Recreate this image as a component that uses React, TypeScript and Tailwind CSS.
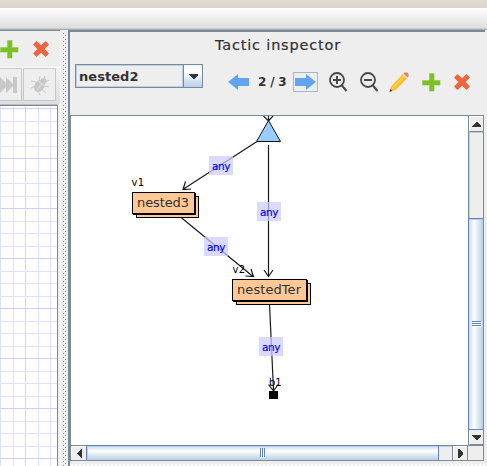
import React from "react";

const GRID_X = [0, 13, 25, 38, 50];
const GRID_Y = Array.from({ length: 29 }, (_, i) => Math.round(2.4 + i * 12.5));

function Plus() {
  return (
    <svg width="20" height="20" viewBox="0 0 20 20" shapeRendering="crispEdges">
      <path d="M8 1h5v7h6v5h-6v6H8v-6H1V8h7z" fill="#7fbf26" stroke="#b5dc85" strokeWidth=".6" />
    </svg>
  );
}

function Cross() {
  return (
    <svg width="18" height="18" viewBox="0 0 18 18">
      <path d="M4.500 1 9 5.300 13.500 1 17 4.500 12.700 9l4.300 4.400-3.500 3.600L9 12.700 4.500 17 1 13.400 5.300 9 1 4.500z" fill="#ee6640" />
    </svg>
  );
}

function Arrow({ flip = false }: { flip?: boolean }) {
  return (
    <svg width="21" height="16" viewBox="0 0 21 16" className={flip ? "-scale-x-100" : ""}>
      <path d="M0 4h11V0l10 8-10 8v-4H0z" fill="#62a4ef" />
    </svg>
  );
}

function Magnifier({ plus = false }: { plus?: boolean }) {
  return (
    <svg width="19" height="20" viewBox="0 0 19 20" fill="none" stroke="#484848">
      <circle cx="8" cy="8" r="7" strokeWidth="1.8" />
      <path d="m12.500 13 5 6" strokeWidth="2" />
      <path d={plus ? "M4 8h8M8 4v8" : "M4 8h8"} strokeWidth="2" />
    </svg>
  );
}

function Pencil() {
  return (
    <svg width="20" height="20" viewBox="0 0 20 20">
      <path d="M13.500 2.500 18 6.200 6.300 18.300 1 19.500l1-5z" fill="#fbb92b" />
      <path d="m14.500 3.500 1.700 1.300L4 17.500 2.500 16z" fill="#ffd13f" />
      <path d="m14 2 1.500-1.500h3L19.500 2v2.500L18 6z" fill="#ea8069" />
      <path d="m13.500 2.500 1-.8L18.800 5.400 18 6.300z" fill="#e8e3df" />
      <path d="m1.200 16.800 2.200 2.100L.5 19.700z" fill="#454545" />
    </svg>
  );
}

function Bug() {
  return (
    <svg width="20" height="22" viewBox="0 0 20 22" fill="#c8c8c8" stroke="#c8c8c8">
      <ellipse cx="9.500" cy="12" rx="4.400" ry="6" transform="rotate(35 9.500 12)" />
      <circle cx="13.500" cy="7" r="2.700" />
      <path fill="none" d="m6 8-5-1M6 12l-5 2M8 17l2 4M11 15l5 4M14 12l5 1M9 7l1-5M14 5l1-3M16 8l3-2" />
      <path fill="none" stroke="#eee" strokeWidth=".7" d="m8 7 7 5M12 9l-5 7" />
    </svg>
  );
}

function Caret({ dir }: { dir: "up" | "down" | "left" | "right" }) {
  const shapes = {
    up: "M0 5V4L4 0h1l4 4v1z",
    down: "M0 0h9v1L5 5H4L0 1z",
    left: "M4 0h1v9H4L0 5V4z",
    right: "M0 0h1l4 4v1L1 9H0z",
  };
  const wide = dir === "up" || dir === "down";
  return (
    <svg width={wide ? 9 : 5} height={wide ? 5 : 9} shapeRendering="crispEdges">
      <path d={shapes[dir]} fill="#333" />
    </svg>
  );
}

function Grip({ vertical = false }: { vertical?: boolean }) {
  return vertical ? (
    <svg width="10" height="6" shapeRendering="crispEdges">
      <path d="M1 1h9v1H1zM1 3h9v1H1zM1 5h9v1H1z" fill="#fff" />
      <path d="M0 0h9v1H0zM0 2h9v1H0zM0 4h9v1H0z" fill="#6382bf" />
    </svg>
  ) : (
    <svg width="6" height="10" shapeRendering="crispEdges">
      <path d="M1 1h1v9H1zM3 1h1v9H3zM5 1h1v9H5z" fill="#fff" />
      <path d="M0 0h1v9H0zM2 0h1v9H2zM4 0h1v9H4z" fill="#6382bf" />
    </svg>
  );
}

function EdgeLabel({ x, y }: { x: number; y: number }) {
  return (
    <g>
      <rect x={x} y={y} width="24" height="19" fill="#ccccff" fillOpacity=".72" />
      <text x={x + 3} y={y + 13.5} fontSize="10.500" fill="#0000f5" stroke="#0000f5" strokeWidth=".15" textLength="18.500">any</text>
    </g>
  );
}

function Node({ x, y, w, label }: { x: number; y: number; w: number; label: string }) {
  return (
    <g>
      <g fill="#ffc896" stroke="#000" shapeRendering="crispEdges">
        <rect x={x + 4.5} y={y + 4.5} width={w} height="21" />
        <rect x={x + 1.5} y={y + 1.5} width={w} height="21" fill="#000" />
        <rect x={x + 0.5} y={y + 0.5} width={w} height="21" />
      </g>
      <text x={x + 5} y={y + 15} fontSize="13" fill="#303030" textLength={w - 10}>{label}</text>
    </g>
  );
}

function Graph() {
  return (
    <svg width="397" height="329" viewBox="71 116 397 329" className="block bg-white font-['DejaVu_Sans',sans-serif]">
      <g stroke="#1a1a1a" strokeWidth="1.2" fill="none">
        <path d="m257 141.500-73.500 47.500M185.500 181.500l-2.500 8 8-.5" />
        <path d="m180.500 217 72.500 59.500M251 269l2.500 7.500-8-.5" />
        <path d="M268.500 145v131M264 270l4.500 6.500 4.500-6.500" />
        <path d="m269.500 304 4 86M268.500 384.500l5 6.500 4.500-6.500" />
        <path d="M268.500 116v5M263.500 116l5 5 4.500-5" />
      </g>
      <path d="m268.500 120.500 12 21h-24z" fill="#99ccff" stroke="#111" />
      <Node x={132} y={192} w={62} label="nested3" />
      <Node x={232} y={279} w={74} label="nestedTer" />
      <rect x="269" y="391" width="9" height="8" fill="#000" shapeRendering="crispEdges" />
      <EdgeLabel x={209} y={156} />
      <EdgeLabel x={257} y={202} />
      <EdgeLabel x={204} y={237} />
      <EdgeLabel x={259} y={337} />
      <g fontSize="10" fill="#000">
        <text x="131.500" y="186" textLength="12.500">v1</text>
        <text x="232.500" y="273" textLength="12.500">v2</text>
        <text x="269" y="386" textLength="12.500">b1</text>
      </g>
    </svg>
  );
}

function LeftPane() {
  return (
    <div className="flex w-[60px] shrink-0 flex-col bg-[#eeeeee]">
      <div className="h-px shrink-0 bg-[#7a8a99]" />
      <div className="flex h-[37px] shrink-0 items-center gap-[13px] border-b border-white">
        <div className="-ml-px"><Plus /></div>
        <Cross />
      </div>
      <div className="flex h-[36px] shrink-0 items-start gap-px bg-gradient-to-b from-[#f4f4f4] to-[#dddddd]">
        <div className="flex h-[33px] w-[22px] items-center border border-l-0 border-[#c8c8c8] bg-[#eeeeee]">
          <svg width="17" height="18" viewBox="0 0 17 18" fill="#c8c8c8">
            <path d="M0 1l6 6V1l7 7V1h4v16h-4v-7l-7 7v-6l-6 6z" />
          </svg>
        </div>
        <div className="flex h-[33px] w-[33px] items-center justify-center border border-[#c8c8c8] bg-[#eeeeee]">
          <Bug />
        </div>
      </div>
      <div className="mr-[2px] h-px shrink-0 bg-[#bbbbbb]" />
      <div className="mr-[2px] flex min-h-0 flex-1 border-r border-t border-[#7a8a99] bg-white">
        <svg width="57" height="361" shapeRendering="crispEdges">
          {GRID_X.map((x) => (
            <path key={x} d={`M${x + 0.5} 0v361`} stroke={x === 25 ? "#d3d3fa" : "#e0e0ff"} />
          ))}
          {GRID_Y.map((y, i) => (
            <path key={y} d={`M0 ${y + 0.5}h57`} stroke={i % 4 === 0 ? "#d0d0f5" : "#e0e0ff"} />
          ))}
        </svg>
      </div>
    </div>
  );
}

function Splitter() {
  return (
    <div className="w-2 shrink-0 bg-[#eeeeee]">
      <svg width="8" height="436" shapeRendering="crispEdges">
        <defs>
          <pattern id="bumps" width="4" height="4" patternUnits="userSpaceOnUse" x="3" y="3">
            <path d="M0 0h1v1H0zM2 2h1v1H2z" fill="#7a8a99" />
            <path d="M1 1h1v1H1zM3 3h1v1H3z" fill="#fff" />
          </pattern>
        </defs>
        <path d="M0 0h1v436H0z" fill="#fff" />
        <rect x="3" y="3" width="4" height="433" fill="url(#bumps)" />
      </svg>
    </div>
  );
}

function Toolbar() {
  return (
    <div className="flex h-[83px] shrink-0 flex-col font-['DejaVu_Sans',sans-serif] text-[#333333]">
      <div className="h-[27px] pl-px pt-[4px] text-center text-[14.5px] leading-[18px] tracking-[.8px] [-webkit-text-stroke:.2px_#333]">Tactic inspector</div>
      <div className="flex h-[46px] items-center pl-[5px]">
        <div className="mb-[12px] flex h-6 w-[128px] border border-[#7a8a99]">
          <div className="flex w-[107px] items-center border border-[#b8cfe5] pl-[2px] text-[13px] font-bold leading-none tracking-[.05px]">nested2</div>
          <div className="flex flex-1 items-center justify-center border-l border-[#7a8a99] bg-gradient-to-b from-[#f2f7fb] via-white via-30% to-[#b8cfe5]">
            <Caret dir="down" />
          </div>
        </div>
        <div className="ml-[25px] flex items-center">
          <Arrow flip />
          <div className="ml-[9px] w-[29px] whitespace-nowrap text-[12px] font-bold leading-none"><span className="tracking-[-.2px]">2 / 3</span></div>
          <div className="ml-[6px] flex h-5 w-[25px] items-center justify-center border border-[#a3b8cc]">
            <Arrow />
          </div>
          <div className="ml-[11px] flex"><Magnifier plus /></div>
          <div className="ml-[12px] flex"><Magnifier /></div>
          <div className="ml-[10px] flex"><Pencil /></div>
          <div className="ml-[12px] flex"><Plus /></div>
          <div className="ml-[12px] flex"><Cross /></div>
        </div>
      </div>
    </div>
  );
}

function VerticalScroll() {
  return (
    <div className="flex w-4 shrink-0 flex-col border-x border-[#7a8a99] bg-[#eeeeee]">
      <div className="flex h-[15px] shrink-0 items-center justify-center border-l border-t border-white"><Caret dir="up" /></div>
      <div className="h-[87px] shrink-0 border-l border-t border-[#b8cfe5] border-t-[#7a8a99] shadow-[inset_0_1px_#b8cfe5]" />
      <div className="-ml-px flex flex-1 items-center justify-center border-y border-l border-[#6382bf] bg-gradient-to-r from-[#c8dbed] via-white via-35% to-[#b8cfe5] shadow-[inset_0_1px_#b8cfe5]">
        <div className="ml-[2px]"><Grip vertical /></div>
      </div>
      <div className="flex h-[15px] shrink-0 items-center justify-center border-b border-l border-b-[#7a8a99] border-l-white"><Caret dir="down" /></div>
    </div>
  );
}

function HorizontalScroll() {
  return (
    <div className="flex h-4 shrink-0 border-y border-[#7a8a99] bg-[#eeeeee]">
      <div className="flex w-[15px] shrink-0 items-center justify-center border-l border-t border-white"><Caret dir="left" /></div>
      <div className="-mt-px flex w-[353px] shrink-0 items-center justify-center border-x border-t border-[#6382bf] bg-gradient-to-b from-[#c8dbed] via-white via-35% to-[#b8cfe5] shadow-[inset_1px_1px_#b8cfe5]">
        <Grip />
      </div>
      <div className="w-[13px] shrink-0 border-t border-[#b8cfe5]" />
      <div className="flex w-4 shrink-0 items-center justify-center border-x border-[#7a8a99] shadow-[inset_1px_1px_white]"><Caret dir="right" /></div>
      <div className="w-4 shrink-0 border-r border-[#7a8a99]" />
    </div>
  );
}

export default function App() {
  return (
    <div className="flex h-[466px] w-[487px] flex-col overflow-hidden bg-[#eeeeee]">
      <div className="h-2 shrink-0 bg-gradient-to-b from-[#e2dcd5] to-[#dcd4cb]" />
      <div className="h-[20px] shrink-0 bg-gradient-to-b from-white to-[#dddddd]" />
      <div className="h-px shrink-0 bg-[#cccccc]" />
      <div className="h-px shrink-0 bg-[#a8adb2]" />
      <div className="flex min-h-0 flex-1">
        <LeftPane />
        <Splitter />
        <div className="flex w-[417px] shrink-0 flex-col border-l-2 border-t-2 border-[#7a8a99]">
          <Toolbar />
          <div className="flex h-[330px] w-[414px] shrink-0 border-l border-t border-[#7a8a99]">
            <Graph />
            <VerticalScroll />
          </div>
          <div className="w-[414px] shrink-0 border-l border-[#7a8a99]"><HorizontalScroll /></div>
          <div className="mt-[2px] h-[3px] bg-[radial-gradient(circle,white_1px,transparent_1px)] bg-[length:4px_4px]" />
        </div>
        <div className="w-[2px] bg-[#eeeeee]" />
      </div>
    </div>
  );
}
